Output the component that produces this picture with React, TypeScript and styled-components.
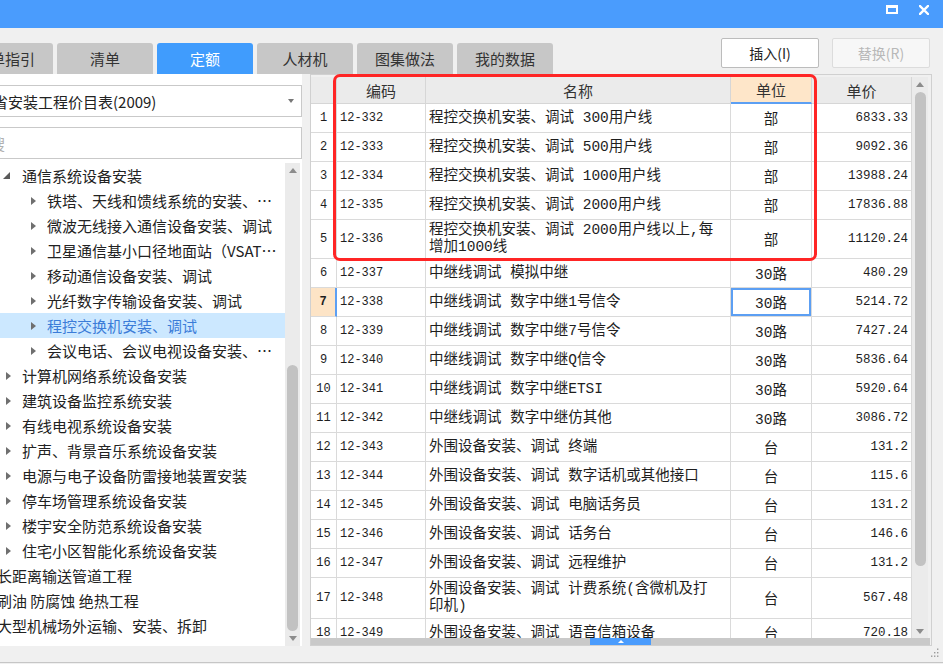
import React from "react";
import styled, { createGlobalStyle } from "styled-components";

const UI_FONT = `"Noto Sans CJK SC", "Noto Sans", sans-serif`;
const GRID_FONT = `"Liberation Mono", "Noto Sans CJK SC", monospace`;
const BLUE = "#4a9cfd";
const LINE = "#dadada";
const COLS = "26px 89px 305px 81px 100px";

const GlobalStyle = createGlobalStyle`
  html, body {
    margin: 0;
    padding: 0;
    background: #f0f0f0;
    overflow: hidden;
  }
  body {
    font-family: ${UI_FONT};
  }
  * {
    box-sizing: border-box;
  }
`;

interface ITreeItem {
  level: number;
  label: string;
  expanded?: boolean;
  selected?: boolean;
}

interface IQuota {
  no: number;
  code: string;
  name: string;
  unit: string;
  price: string;
  height: number;
}

const tabs = ["清单指引", "清单", "定额", "人材机", "图集做法", "我的数据"];

const treeItems: ITreeItem[] = [
  { level: 1, label: "通信系统设备安装", expanded: true },
  { level: 2, label: "铁塔、天线和馈线系统的安装、调试" },
  { level: 2, label: "微波无线接入通信设备安装、调试" },
  { level: 2, label: "卫星通信基小口径地面站（VSAT）设备安装、调试" },
  { level: 2, label: "移动通信设备安装、调试" },
  { level: 2, label: "光纤数字传输设备安装、调试" },
  { level: 2, label: "程控交换机安装、调试", selected: true },
  { level: 2, label: "会议电话、会议电视设备安装、调试" },
  { level: 1, label: "计算机网络系统设备安装" },
  { level: 1, label: "建筑设备监控系统安装" },
  { level: 1, label: "有线电视系统设备安装" },
  { level: 1, label: "扩声、背景音乐系统设备安装" },
  { level: 1, label: "电源与电子设备防雷接地装置安装" },
  { level: 1, label: "停车场管理系统设备安装" },
  { level: 1, label: "楼宇安全防范系统设备安装" },
  { level: 1, label: "住宅小区智能化系统设备安装" },
  { level: 0, label: "长距离输送管道工程" },
  { level: 0, label: "刷油 防腐蚀 绝热工程" },
  { level: 0, label: "大型机械场外运输、安装、拆卸" },
];

const quotas: IQuota[] = [
  { no: 1, code: "12-332", name: "程控交换机安装、调试 300用户线", unit: "部", price: "6833.33", height: 29 },
  { no: 2, code: "12-333", name: "程控交换机安装、调试 500用户线", unit: "部", price: "9092.36", height: 29 },
  { no: 3, code: "12-334", name: "程控交换机安装、调试 1000用户线", unit: "部", price: "13988.24", height: 29 },
  { no: 4, code: "12-335", name: "程控交换机安装、调试 2000用户线", unit: "部", price: "17836.88", height: 29 },
  { no: 5, code: "12-336", name: "程控交换机安装、调试 2000用户线以上,每\n增加1000线", unit: "部", price: "11120.24", height: 39 },
  { no: 6, code: "12-337", name: "中继线调试 模拟中继", unit: "30路", price: "480.29", height: 29 },
  { no: 7, code: "12-338", name: "中继线调试 数字中继1号信令", unit: "30路", price: "5214.72", height: 29 },
  { no: 8, code: "12-339", name: "中继线调试 数字中继7号信令", unit: "30路", price: "7427.24", height: 29 },
  { no: 9, code: "12-340", name: "中继线调试 数字中继Q信令", unit: "30路", price: "5836.64", height: 29 },
  { no: 10, code: "12-341", name: "中继线调试 数字中继ETSI", unit: "30路", price: "5920.64", height: 29 },
  { no: 11, code: "12-342", name: "中继线调试 数字中继仿其他", unit: "30路", price: "3086.72", height: 29 },
  { no: 12, code: "12-343", name: "外围设备安装、调试 终端", unit: "台", price: "131.2", height: 29 },
  { no: 13, code: "12-344", name: "外围设备安装、调试 数字话机或其他接口", unit: "台", price: "115.6", height: 29 },
  { no: 14, code: "12-345", name: "外围设备安装、调试 电脑话务员", unit: "台", price: "131.2", height: 29 },
  { no: 15, code: "12-346", name: "外围设备安装、调试 话务台", unit: "台", price: "146.6", height: 29 },
  { no: 16, code: "12-347", name: "外围设备安装、调试 远程维护", unit: "台", price: "131.2", height: 29 },
  { no: 17, code: "12-348", name: "外围设备安装、调试 计费系统(含微机及打\n印机)", unit: "台", price: "567.48", height: 41 },
  { no: 18, code: "12-349", name: "外围设备安装、调试 语音信箱设备", unit: "台", price: "720.18", height: 29 },
];

const CURRENT_ROW = 7;

const MaxIcon = () => (
  <svg width="12" height="9" viewBox="0 0 12 9">
    <path d="M0 0H12V9H0Z M2 3V7H10V3Z" fill="#fff" fillRule="evenodd" />
  </svg>
);

const CloseIcon = () => (
  <svg width="10" height="10" viewBox="0 0 10 10">
    <path d="M1 1L9 9M9 1L1 9" stroke="#fff" strokeWidth="2.4" strokeLinecap="square" />
  </svg>
);

const GripIcon = () => (
  <svg width="8" height="9" viewBox="0 0 8 9">
    {[
      [6.5, 1],
      [6.5, 4.5],
      [3.5, 4.5],
      [6.5, 8],
      [3.5, 8],
      [0.5, 8],
    ].map(([x, y]) => (
      <rect key={`${x}-${y}`} x={x - 0.5} y={y - 0.5} width="1.4" height="1.4" fill="#9a9a9a" />
    ))}
  </svg>
);

const App: React.FC = () => {
  return (
    <>
      <GlobalStyle />
      <Window>
        <TitleBar>
          <MaxIcon />
          <CloseIcon />
        </TitleBar>

        <Toolbar>
          <Tabs>
            {tabs.map((tab) => (
              <Tab key={tab} $active={tab === "定额"}>
                {tab}
              </Tab>
            ))}
          </Tabs>
          <Actions>
            <ActionButton>插入(I)</ActionButton>
            <ActionButton disabled>替换(R)</ActionButton>
          </Actions>
        </Toolbar>

        <Body>
          <LeftPane>
            <Select>
              <SelectText>省安装工程价目表(2009)</SelectText>
              <Caret />
            </Select>
            <Search placeholder="搜" />
            <TreeArea>
              <TreeList>
                {treeItems.map((item) => (
                  <TreeRow key={item.label} $level={item.level} $selected={item.selected}>
                    <Toggle>{item.expanded ? <Expanded /> : <Collapsed />}</Toggle>
                    <TreeLabel>{item.label}</TreeLabel>
                  </TreeRow>
                ))}
              </TreeList>
              <VScroll $width={15}>
                <ArrowBox $height={14}>
                  <UpArrow />
                </ArrowBox>
                <Thumb $height={266} />
                <ArrowBox $height={15}>
                  <DownArrow />
                </ArrowBox>
              </VScroll>
            </TreeArea>
          </LeftPane>

          <RightPane>
            <GridArea>
              <Table>
                <HeaderRow>
                  <HeaderCell />
                  <HeaderCell>编码</HeaderCell>
                  <HeaderCell>名称</HeaderCell>
                  <HeaderCell $highlight>单位</HeaderCell>
                  <HeaderCell>单价</HeaderCell>
                </HeaderRow>
                {quotas.map((q) => (
                  <Row key={q.no} $height={q.height}>
                    <NumCell $current={q.no === CURRENT_ROW}>{q.no}</NumCell>
                    <CodeCell>{q.code}</CodeCell>
                    <NameCell>{q.name}</NameCell>
                    <UnitCell $focused={q.no === CURRENT_ROW}>{q.unit}</UnitCell>
                    <PriceCell>{q.price}</PriceCell>
                  </Row>
                ))}
              </Table>
              <VScroll $width={16}>
                <ArrowBox $height={15}>
                  <UpArrow />
                </ArrowBox>
                <Thumb $height={474} $flow />
                <ArrowBox $height={14} $push>
                  <DownArrow />
                </ArrowBox>
              </VScroll>
            </GridArea>
            <HBar>
              <HThumb>
                <Notch />
              </HThumb>
            </HBar>
            <Annotation />
          </RightPane>
        </Body>

        <StatusBar>
          <GripIcon />
        </StatusBar>
      </Window>
    </>
  );
};

export default App;

const Window = styled.div`
  width: 943px;
  height: 664px;
  overflow: hidden;
  display: flex;
  flex-direction: column;
  background: #f0f0f0;
  color: #222;
`;

const TitleBar = styled.div`
  height: 28px;
  flex-shrink: 0;
  background: ${BLUE};
  display: flex;
  justify-content: flex-end;
  align-items: flex-start;
  gap: 21px;
  padding: 5px 14px 0 0;
`;

const Toolbar = styled.div`
  height: 46px;
  flex-shrink: 0;
  display: flex;
  align-items: flex-end;
`;

const Tabs = styled.div`
  display: flex;
  gap: 4px;
  margin-left: -43px;
`;

const Tab = styled.div<{ $active?: boolean }>`
  width: 96px;
  height: 31px;
  display: flex;
  align-items: center;
  justify-content: center;
  border-radius: 3px 3px 0 0;
  background: ${(p) => (p.$active ? "#409cfd" : "#c7c7c7")};
  color: ${(p) => (p.$active ? "#fff" : "#333")};
  font-size: 15px;
`;

const Actions = styled.div`
  align-self: flex-start;
  display: flex;
  gap: 13px;
  margin: 10px 13px 0 auto;
`;

const ActionButton = styled.button`
  width: 98px;
  height: 30px;
  padding: 0;
  border: 1px solid #bcbcbc;
  border-radius: 2px;
  background: #fff;
  font-family: ${UI_FONT};
  font-size: 14px;
  color: #222;

  &:disabled {
    border-color: #dcdcdc;
    background: #f7f7f7;
    color: #b8b8b8;
  }
`;

const Body = styled.div`
  height: 572px;
  flex-shrink: 0;
  display: flex;
  gap: 8px;
`;

const LeftPane = styled.aside`
  width: 346px;
  margin-left: -44px;
  flex-shrink: 0;
  background: #fff;
  display: flex;
  flex-direction: column;
  padding-top: 11px;
`;

const Select = styled.div`
  height: 32px;
  margin-left: 4px;
  border: 1px solid #c9c9c9;
  display: flex;
  align-items: center;
  padding: 0 7px 0 32px;
  font-size: 15px;
  color: #222;
`;

const SelectText = styled.span`
  flex: 1;
  white-space: nowrap;
`;

const Caret = styled.span`
  width: 0;
  height: 0;
  border-top: 4px solid #777;
  border-left: 3.5px solid transparent;
  border-right: 3.5px solid transparent;
`;

const Search = styled.input`
  height: 32px;
  margin: 10px 0 0 4px;
  border: 1px solid #c9c9c9;
  outline: none;
  padding: 0 0 0 29px;
  font-family: ${UI_FONT};
  font-size: 15px;

  &::placeholder {
    color: #b0b0b0;
  }
`;

const TreeArea = styled.div`
  flex: 1;
  min-height: 0;
  margin-top: 4px;
  display: flex;
`;

const TreeList = styled.div`
  flex: 1;
  min-width: 0;
  overflow: hidden;
`;

const TreeRow = styled.div<{ $level: number; $selected?: boolean }>`
  height: 25px;
  display: flex;
  align-items: center;
  padding: 0 5px 0 ${(p) => 22 + p.$level * 25}px;
  background: ${(p) => (p.$selected ? "#cce8ff" : "transparent")};
  color: ${(p) => (p.$selected ? "#3b7cd8" : "#222")};
  font-size: 15px;
`;

const Toggle = styled.span`
  width: 19px;
  flex-shrink: 0;
  display: flex;
  align-items: center;
`;

const Collapsed = styled.span`
  width: 0;
  height: 0;
  margin-left: 3px;
  border-left: 5px solid #6f6f6f;
  border-top: 4px solid transparent;
  border-bottom: 4px solid transparent;
`;

const Expanded = styled.span`
  width: 0;
  height: 0;
  margin-top: -1px;
  border-bottom: 7px solid #5a5a5a;
  border-left: 7px solid transparent;
`;

const TreeLabel = styled.span`
  min-width: 0;
  overflow: hidden;
  white-space: nowrap;
  text-overflow: ellipsis;
`;

const VScroll = styled.div<{ $width: number }>`
  width: ${(p) => p.$width}px;
  flex-shrink: 0;
  margin-right: 2px;
  background: #ebebeb;
  display: flex;
  flex-direction: column;
  align-items: center;
`;

const ArrowBox = styled.div<{ $height: number; $push?: boolean }>`
  height: ${(p) => p.$height}px;
  width: 100%;
  flex-shrink: 0;
  display: flex;
  align-items: center;
  justify-content: center;
  margin-top: ${(p) => (p.$push ? "auto" : "0")};
`;

const UpArrow = styled.span`
  width: 0;
  height: 0;
  border-bottom: 5px solid #8c8c8c;
  border-left: 4.5px solid transparent;
  border-right: 4.5px solid transparent;
`;

const DownArrow = styled.span`
  width: 0;
  height: 0;
  border-top: 5px solid #8c8c8c;
  border-left: 4.5px solid transparent;
  border-right: 4.5px solid transparent;
`;

const Thumb = styled.div<{ $height: number; $flow?: boolean }>`
  width: 11px;
  height: ${(p) => p.$height}px;
  flex-shrink: 0;
  margin-top: ${(p) => (p.$flow ? "0" : "auto")};
  border-radius: 6px;
  background: #c2c2c2;
`;

const RightPane = styled.section`
  position: relative;
  width: 622px;
  flex-shrink: 0;
  border: 1px solid #d0d0d0;
  background: #f0f0f0;
  display: flex;
  flex-direction: column;
  padding-top: 2px;
`;

const GridArea = styled.div`
  flex: 1;
  min-height: 0;
  display: flex;
`;

const Table = styled.div`
  width: 601px;
  flex-shrink: 0;
  overflow: hidden;
  background: #fff;
  display: flex;
  flex-direction: column;
`;

const HeaderRow = styled.div`
  display: grid;
  grid-template-columns: ${COLS};
  height: 27px;
  flex-shrink: 0;
  background: #ebebeb;
`;

const HeaderCell = styled.div<{ $highlight?: boolean }>`
  display: flex;
  align-items: center;
  justify-content: center;
  border-right: 1px solid #d6d6d6;
  border-bottom: ${(p) => (p.$highlight ? "2px solid #5c9ff3" : "1px solid #d6d6d6")};
  background: ${(p) => (p.$highlight ? "#fee6c9" : "transparent")};
  font-size: 15px;
  color: #333;
`;

const Row = styled.div<{ $height: number }>`
  display: grid;
  grid-template-columns: ${COLS};
  height: ${(p) => p.$height}px;
  flex-shrink: 0;
`;

const BaseCell = styled.div`
  display: flex;
  align-items: center;
  overflow: hidden;
  white-space: nowrap;
  border-right: 1px solid ${LINE};
  border-bottom: 1px solid ${LINE};
  font-family: ${GRID_FONT};
  color: #1e1e1e;
`;

const NumCell = styled(BaseCell)<{ $current?: boolean }>`
  justify-content: center;
  font-size: 12px;
  font-weight: ${(p) => (p.$current ? 700 : 400)};
  background: ${(p) => (p.$current ? "#fde4c6" : "#fff")};
  border-right: ${(p) => (p.$current ? "2px solid #5c9ff3" : `1px solid ${LINE}`)};
`;

const CodeCell = styled(BaseCell)`
  padding-left: 3px;
  font-size: 12px;
`;

const NameCell = styled(BaseCell)`
  padding-left: 3px;
  white-space: pre;
  font-size: 14.5px;
  line-height: 17px;
`;

const UnitCell = styled(BaseCell)<{ $focused?: boolean }>`
  justify-content: center;
  padding-bottom: 2px;
  font-size: 14.5px;
  box-shadow: ${(p) => (p.$focused ? "inset 0 0 0 2px #5c9ff3" : "none")};
`;

const PriceCell = styled(BaseCell)`
  justify-content: flex-end;
  padding-right: 3px;
  font-size: 12.5px;
`;

const HBar = styled.div`
  height: 7px;
  flex-shrink: 0;
  margin-right: 1px;
  background: #c9c9c9;
  display: flex;
  justify-content: center;
`;

const HThumb = styled.div`
  width: 61px;
  background: ${BLUE};
  display: flex;
  align-items: center;
  justify-content: center;
`;

const Notch = styled.span`
  width: 0;
  height: 0;
  border-bottom: 3px solid #fff;
  border-left: 3px solid transparent;
  border-right: 3px solid transparent;
`;

const Annotation = styled.div`
  position: absolute;
  left: 22px;
  top: -1px;
  width: 484px;
  height: 187px;
  border: 3px solid #ff2525;
  border-radius: 7px;
  pointer-events: none;
`;

const StatusBar = styled.div`
  flex: 1;
  display: flex;
  justify-content: flex-end;
  align-items: flex-start;
  padding: 2px 4px 0 0;
  border-bottom: 1px solid #c6c6c6;
  margin-bottom: 1px;
`;
